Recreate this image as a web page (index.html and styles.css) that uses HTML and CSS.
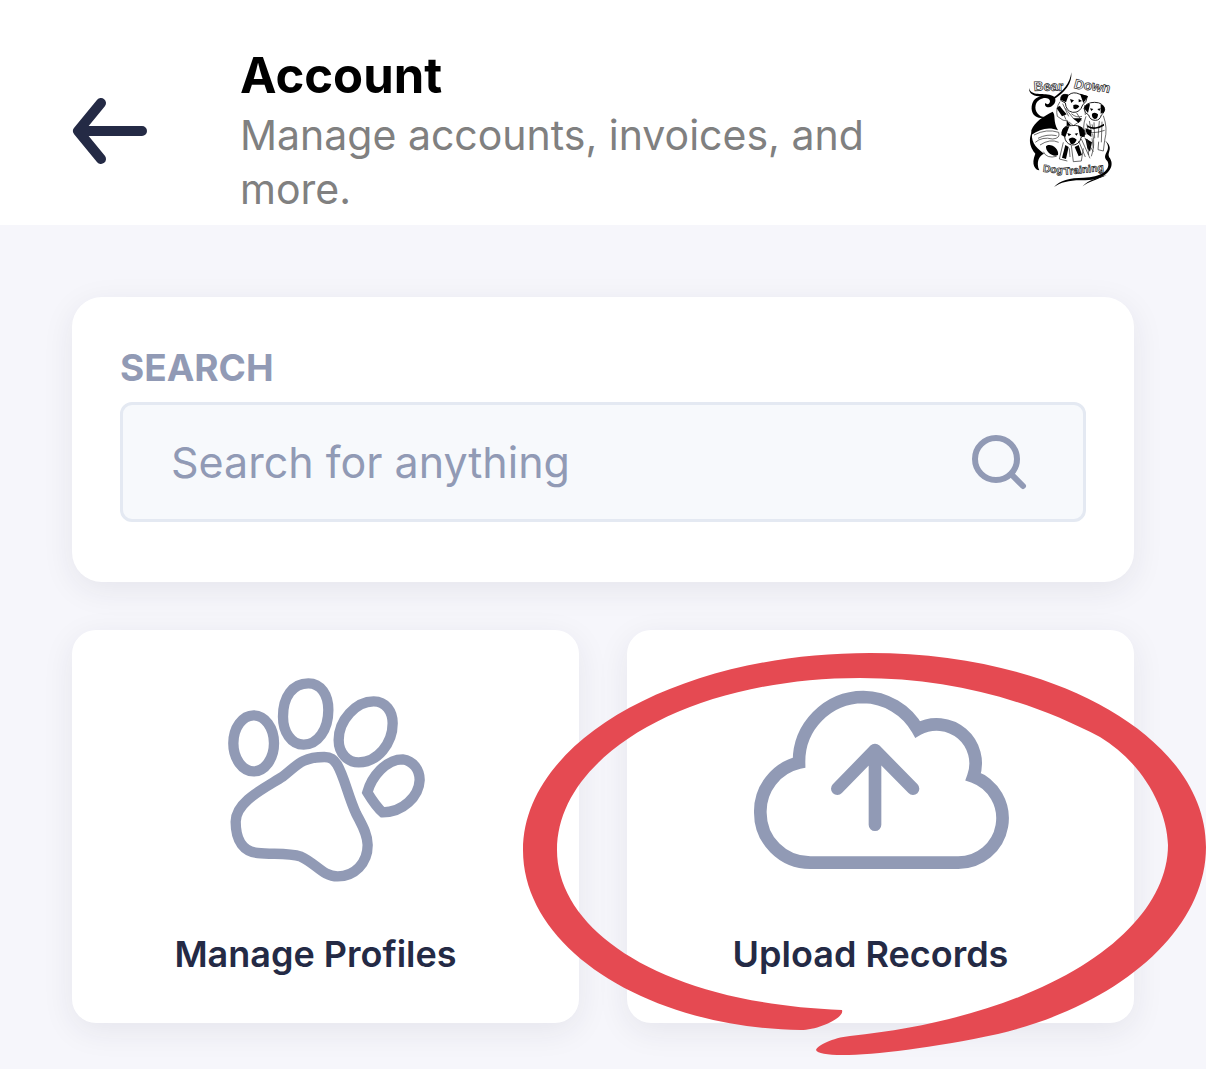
FILE: index.html
```html
<!DOCTYPE html>
<html lang="en">
<head>
  <meta charset="UTF-8" />
  <meta name="viewport" content="width=device-width, initial-scale=1.0" />
  <title>Account</title>
  <link rel="stylesheet" href="styles.css">
</head>
<body>
  <header class="topbar">
    <button class="back-btn" aria-label="Back">
      <svg viewBox="0 0 76 68" width="76" height="68">
        <path d="M70 34H6M29 6L6 34L29 62" />
      </svg>
    </button>
    <div class="heading">
      <h1>Account</h1>
      <p>Manage accounts, invoices, and more.</p>
    </div>
    <svg class="logo" viewBox="0 0 360 435" role="img" aria-label="Bear Down Dog Training">
      <text class="logo-text big" x="72" y="108" rotate="-4">Bear</text>
      <text class="logo-text big" x="190" y="98" rotate="8" transform="rotate(7 190 98)">Down</text>

      <!-- swirls -->
      <path class="ink" d="M57 98C62 122 90 114 118 119C146 124 138 150 120 156C110 160 102 152 106 144C111 150 120 148 120 138C118 124 84 126 77 150C72 172 90 188 108 186C82 196 62 180 65 154C68 134 80 126 94 124C74 124 56 118 57 98Z" />
      <path class="ink" d="M184 52C187 84 166 112 130 134L126 130C160 110 180 84 184 52Z" />
      <path class="ink" d="M64 226C74 200 100 184 128 170C138 180 128 198 144 226C116 214 90 222 64 240Z" />
      <path class="ink" d="M68 226C50 260 66 284 76 296C62 330 76 344 88 346C78 324 86 302 102 296C74 276 60 256 68 226Z" />
      <path class="ink" d="M284 256C312 286 270 298 292 318C306 344 270 368 222 368C178 368 150 376 132 396C154 380 184 374 226 376C284 376 318 340 300 310C286 292 316 282 284 256Z" />
      <path class="ink" d="M290 360C264 368 236 374 218 394C234 380 262 374 290 360Z" />
      <path class="ink" d="M108 274C120 262 148 280 144 300C130 308 106 292 108 274Z" />
      <path class="line" d="M72 240Q110 220 146 232Q152 250 128 252Q96 244 76 262M90 270Q120 250 146 262M84 250Q110 236 140 242M100 290Q110 312 140 304" />

      <!-- left dog -->
      <path class="fur" d="M152 136Q150 112 176 120Q190 108 210 118L232 124Q230 142 218 150Q210 174 188 172Q168 168 166 144Z" />
      <path class="ink" d="M152 134Q152 112 176 120L168 142ZM210 116L234 124L220 144ZM180 132L192 136L184 144ZM206 132L216 138L206 142ZM190 150Q202 146 208 154Q200 168 190 160Z" />
      <path class="line" d="M150 140Q136 160 142 184Q160 200 174 198M158 146L176 184M150 154L168 194M184 176Q200 190 216 184M166 160L190 190M200 174L214 196L190 212L176 200M224 150L226 180" />
      <path class="ink" d="M140 160L156 184L170 178L148 152ZM170 196L184 212L170 222ZM188 190L216 190L206 204Z" />

      <!-- right dog -->
      <path class="fur" d="M222 160Q228 142 254 142Q280 142 284 164Q280 178 274 180Q270 196 256 196Q240 196 236 180Q224 176 222 160Z" />
      <path class="ink" d="M222 160Q228 144 240 148L234 174ZM272 148Q290 154 282 172L272 176ZM240 160L250 162L244 168ZM262 162L272 160L268 168ZM246 176Q256 170 264 178Q264 192 254 192Q244 188 246 176Z" />
      <path class="line" d="M228 184Q214 220 228 240M280 182Q294 220 284 256M238 198L244 230M252 202L254 250M268 198L264 248M276 200L274 262M230 206L236 232M246 208L250 224M222 226Q244 240 284 226M246 250L250 280M284 256L280 288L264 284L266 260" />
      <path class="ink" d="M232 210Q250 226 282 206L282 212Q254 230 232 216Z" />

      <!-- middle dog -->
      <path class="fur" d="M156 234Q158 210 184 212Q210 208 224 226Q228 242 214 246Q208 272 184 270Q166 264 164 246Z" />
      <path class="ink" d="M154 240Q154 214 178 214L166 246ZM204 212Q230 220 224 246L210 244ZM172 234L184 238L176 244ZM194 236L204 234L200 242ZM176 252Q188 242 200 254Q194 270 182 266ZM226 220L244 226L244 246L230 236ZM166 270L156 308L168 312L176 276ZM194 276L206 304L216 300L206 270ZM226 250L246 262L240 290L232 280Z" />
      <path class="line" d="M160 262L148 312L172 318M184 272L190 320L214 318L220 280M214 252L240 310M224 248L250 290M206 258L226 306M178 280L180 306M248 236Q256 270 244 304M232 252L236 300" />

      <text class="logo-text" x="98" y="350" transform="rotate(6 98 350)">Dog</text>
      <text class="logo-text" x="162" y="360" transform="rotate(-6 162 360)">Training</text>
    </svg>
  </header>

  <main class="content">
    <form class="card search-card">
      <label for="search">SEARCH</label>
      <div class="search-box">
        <input type="text" id="search" placeholder="Search for anything" />
        <button type="button" class="search-btn" aria-label="Search">
          <svg viewBox="0 0 56 56" width="56" height="56">
            <circle cx="25" cy="25" r="21" />
            <path d="M40 40L52 52" />
          </svg>
        </button>
      </div>
    </form>

    <div class="tiles">
      <a href="#profiles" class="card tile">
        <svg class="tile-icon" viewBox="0 0 750 720" width="250" height="240">
          <ellipse cx="158" cy="250" rx="61" ry="84" />
          <path d="M322 70C360 70 382 105 382 150C382 210 350 254 308 254C270 254 246 215 246 170C246 110 275 70 322 70Z" />
          <path d="M518 124C555 124 575 155 575 190C575 250 530 307 473 307C440 307 413 280 413 240C413 180 465 124 518 124Z" />
          <path d="M499 397C512 350 555 298 605 298C637 302 656 330 656 360C654 410 605 457 545 457C525 440 510 415 499 397Z" />
          <path d="M370 291C300 291 285 320 245 350C190 385 104 425 104 485C104 545 130 575 170 579C215 584 260 577 300 590C345 610 365 649 410 649C460 649 500 610 500 555C500 520 480 490 465 460C440 405 430 350 408 313C398 298 390 291 370 291Z" />
        </svg>
        <span>Manage Profiles</span>
      </a>
      <a href="#records" class="card tile">
        <svg class="tile-icon cloud" viewBox="0 0 840 720" width="280" height="240">
          <path d="M208 608H651A133 133 0 0 0 697 350A117 117 0 0 0 530 208A191 191 0 0 0 367 111A194 194 0 0 0 174 308A150 150 0 0 0 58 458A150 150 0 0 0 208 608Z" />
          <path class="arrow" d="M402 494V270M289 386L402 270L516 386" />
        </svg>
        <span>Upload Records</span>
        <!-- marker ring around the upload tile -->
        <svg class="ring" viewBox="523 652 683 404" aria-hidden="true">
          <path d="M842 1010C660 1003 557 930 557 850C557 755 690 678 860 678C950 678 1030 700 1100 737C1142 762 1167 808 1168 845C1168 930 1050 1015 850 1036C832 1038 818 1045 816 1050C820 1060 900 1055 998 1034C1120 1005 1206 930 1206 847C1206 740 1060 653 870 653C680 653 523 740 523 850C523 950 650 1028 801 1030C818 1030 845 1018 842 1010Z" />
        </svg>
      </a>
    </div>
  </main>
</body>
</html>
```
FILE: styles.css
```css
* {
  box-sizing: border-box;
}
body {
  margin: 0;
  font-family: Inter, "Liberation Sans", sans-serif;
  background: #f6f6fb;
  color: #222b45;
  overflow-x: hidden;
}
button {
  border: 0;
  padding: 0;
  background: none;
  cursor: pointer;
}
svg {
  display: block;
}

/* header */
.topbar {
  display: flex;
  align-items: center;
  padding: 46px 76px 9px 72px;
  background: #fff;
}
.back-btn {
  flex: none;
  margin-right: 92px;
}
.back-btn svg {
  fill: none;
  stroke: #242a45;
  stroke-width: 10;
  stroke-linecap: round;
  stroke-linejoin: round;
}
.heading {
  flex: 1;
}
.heading h1 {
  margin: 0 0 2px;
  font-size: 49px;
  line-height: 60px;
  color: #000;
}
.heading p {
  margin: 0;
  max-width: 680px;
  font-size: 41px;
  line-height: 54px;
  color: #808080;
}
.logo {
  flex: none;
  width: 120px;
  height: 145px;
  margin-bottom: 8px;
}
.logo .ink {
  fill: #000;
}
.logo .line {
  fill: none;
  stroke: #222;
  stroke-width: 2;
}
.logo .fur {
  fill: #fff;
  stroke: #222;
  stroke-width: 3;
}
.logo-text {
  font-family: "Liberation Sans Narrow", "Liberation Sans", sans-serif;
  font-size: 31px;
  font-weight: bold;
  fill: #fff;
  stroke: #222;
  stroke-width: 2;
}
.logo-text.big {
  font-size: 40px;
}

/* content */
.content {
  padding: 72px 72px 46px;
}
.card {
  background: #fff;
  border-radius: 24px;
  box-shadow: 0 8px 32px rgba(34, 43, 69, 0.08);
}
.search-card {
  margin-bottom: 48px;
  padding: 47px 48px 60px;
  border-radius: 30px;
}
.search-card label {
  display: block;
  margin-bottom: 10px;
  font-size: 37px;
  font-weight: 700;
  line-height: 48px;
  color: #919ab5;
}
.search-box {
  display: flex;
  align-items: center;
  height: 120px;
  padding: 0 56px 0 48px;
  border: 3px solid #e4e9f2;
  border-radius: 12px;
  background: #f7f9fc;
}
.search-box input {
  flex: 1;
  min-width: 0;
  padding: 0;
  border: 0;
  outline: 0;
  background: none;
  font-family: inherit;
  font-size: 43px;
  color: #242a45;
}
.search-box input::placeholder {
  color: #919ab5;
  opacity: 1;
}
.search-btn svg {
  fill: none;
  stroke: #919ab5;
  stroke-width: 6;
  stroke-linecap: round;
}
.tiles {
  display: grid;
  grid-template-columns: 1fr 1fr;
  gap: 48px;
}
.tile {
  position: relative;
  display: flex;
  flex-direction: column;
  align-items: center;
  padding: 30px 0 45px;
  font-size: 36px;
  font-weight: 600;
  line-height: 48px;
  color: #242a45;
  text-decoration: none;
}
.tile span {
  margin-top: 30px;
  padding-right: 20px;
}
.tile-icon {
  fill: none;
  stroke: #919ab5;
  stroke-width: 31;
}
.tile-icon.cloud {
  stroke-width: 38;
}
.tile-icon .arrow {
  stroke-linecap: round;
  stroke-linejoin: round;
}
.ring {
  position: absolute;
  top: 22px;
  left: -104px;
  width: 683px;
  height: 404px;
  fill: #e54a52;
  pointer-events: none;
}
```
